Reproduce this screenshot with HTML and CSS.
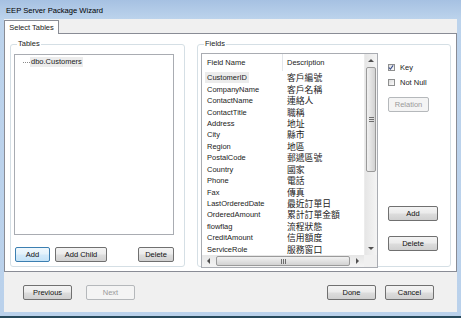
FILE: index.html
```html
<!DOCTYPE html>
<html lang="zh-Hant">
<head>
    <meta charset="UTF-8">
    <meta name="viewport" content="width=device-width, initial-scale=1.0">
    <title>EEP Server Package Wizard</title>
    <link rel="stylesheet" href="styles.css">
</head>
<body>
    <div class="window">
        <div class="titlebar">EEP Server Package Wizard</div>
        <div class="client">
            <div class="tabstrip">
                <div class="tab">Select Tables</div>
            </div>
            <div class="tabpage">
                <div class="group tables">
                    <div class="group-title">Tables</div>
                    <div class="treebox">
                        <div class="tree-item"><span class="tree-line"></span><span class="node">dbo.Customers</span></div>
                    </div>
                    <div class="btn-row">
                        <button class="btn focused w35">Add</button>
                        <button class="btn w52">Add Child</button>
                        <button class="btn w36 push">Delete</button>
                    </div>
                </div>
                <div class="group fields">
                    <div class="group-title">Fields</div>
                    <div class="fields-body">
                        <div class="listview">
                            <div class="lv-main">
                                <div class="lv-header">
                                    <span class="col1">Field Name</span>
                                    <span class="col2">Description</span>
                                </div>
                                <div class="lv-rows">
                                    <div class="row"><span class="col1"><span class="cur">CustomerID</span></span><span class="col2">客戶編號</span></div>
                                    <div class="row"><span class="col1">CompanyName</span><span class="col2">客戶名稱</span></div>
                                    <div class="row"><span class="col1">ContactName</span><span class="col2">連絡人</span></div>
                                    <div class="row"><span class="col1">ContactTitle</span><span class="col2">職稱</span></div>
                                    <div class="row"><span class="col1">Address</span><span class="col2">地址</span></div>
                                    <div class="row"><span class="col1">City</span><span class="col2">縣市</span></div>
                                    <div class="row"><span class="col1">Region</span><span class="col2">地區</span></div>
                                    <div class="row"><span class="col1">PostalCode</span><span class="col2">郵遞區號</span></div>
                                    <div class="row"><span class="col1">Country</span><span class="col2">國家</span></div>
                                    <div class="row"><span class="col1">Phone</span><span class="col2">電話</span></div>
                                    <div class="row"><span class="col1">Fax</span><span class="col2">傳真</span></div>
                                    <div class="row"><span class="col1">LastOrderedDate</span><span class="col2">最近訂單日</span></div>
                                    <div class="row"><span class="col1">OrderedAmount</span><span class="col2">累計訂單金額</span></div>
                                    <div class="row"><span class="col1">flowflag</span><span class="col2">流程狀態</span></div>
                                    <div class="row"><span class="col1">CreditAmount</span><span class="col2">信用額度</span></div>
                                    <div class="row"><span class="col1">ServiceRole</span><span class="col2">服務窗口</span></div>
                                </div>
                            </div>
                            <div class="vscroll">
                                <div class="arrow"><span class="tri up"></span></div>
                                <div class="vthumb"><span class="grip-h"></span></div>
                                <div class="vtrack"></div>
                                <div class="arrow"><span class="tri down"></span></div>
                            </div>
                            <div class="hscroll">
                                <div class="harrow"><span class="tri left"></span></div>
                                <div class="hthumb"><span class="grip-v"></span></div>
                                <div class="harrow"><span class="tri right"></span></div>
                            </div>
                            <div class="corner"></div>
                        </div>
                        <div class="side">
                            <label class="check"><span class="box checked">
                                <svg width="7" height="7" viewBox="0 0 7 7"><path d="M1 3.5 L2.8 5.5 L6 1" fill="none" stroke="#3b4f8c" stroke-width="1.3"/></svg>
                            </span>Key</label>
                            <label class="check"><span class="box"></span>Not Null</label>
                            <button class="btn w41 relation" disabled>Relation</button>
                            <button class="btn w50 add2">Add</button>
                            <button class="btn w50 del2">Delete</button>
                        </div>
                    </div>
                </div>
            </div>
            <div class="footer">
                <button class="btn w49">Previous</button>
                <button class="btn w49 next" disabled>Next</button>
                <button class="btn w49 done">Done</button>
                <button class="btn w49 cancel">Cancel</button>
            </div>
        </div>
    </div>
</body>
</html>
```

FILE: styles.css
```css
* {
    box-sizing: border-box;
}
body {
    margin: 0;
    font-family: "Liberation Sans", "Noto Sans CJK TC", sans-serif;
    font-size: 7.5px;
    color: #222;
}
.window {
    width: 461px;
    height: 318px;
    display: flex;
    flex-direction: column;
    background: linear-gradient(#a6c1e2, #bcd3ec 19px, #bad1eb);
    border-bottom: 2px solid #27495b;
}
.titlebar {
    height: 19px;
    padding: 2px 0 0 6px;
    display: flex;
    align-items: center;
    font-size: 7.6px;
    color: #000;
}
.client {
    flex: 1;
    margin: 0 4px 4px 4px;
    background: #f0f0f0;
    display: flex;
    flex-direction: column;
}
.tabstrip {
    height: 15px;
    padding-top: 1px;
    margin-bottom: -1px;
    display: flex;
}
.tab {
    position: relative;
    z-index: 1;
    width: 55px;
    height: 14px;
    border: 1px solid #898c95;
    border-bottom: none;
    background: #fff;
    display: flex;
    align-items: center;
    justify-content: center;
    border-radius: 1px 1px 0 0;
}
.tabpage {
    height: 239px;
    border: 1px solid #898c95;
    background: #fff;
    padding: 10px 5px 4px 5px;
    display: flex;
    gap: 12px;
}
.group {
    border: 1px solid #d5dfe5;
    border-radius: 3px;
    display: flex;
    flex-direction: column;
}
.group-title {
    align-self: flex-start;
    margin: -6px 0 0 3px;
    padding: 0 1px;
    line-height: 9px;
    background: #fff;
}
.tables {
    width: 175px;
    padding: 0 10px 4px 3px;
}
.treebox {
    flex: 1;
    margin-top: 6px;
    border: 1px solid #a9acb2;
    background: #fff;
    padding-top: 2px;
}
.tree-item {
    display: flex;
    align-items: center;
    padding-left: 8px;
    height: 10px;
}
.tree-line {
    width: 7px;
    border-top: 1px dotted #8a8a8a;
}
.node {
    background: #ececec;
    padding: 0 1px;
    line-height: 10px;
}
.btn-row {
    margin-top: 12px;
    display: flex;
    padding-left: 1px;
}
.btn {
    font: inherit;
    height: 15px;
    padding: 0;
    color: #111;
    border: 1px solid #707070;
    border-radius: 2px;
    background: linear-gradient(#f3f3f3, #ebebeb 48%, #dddddd 52%, #d0d0d0);
}
.btn:disabled {
    color: #9a9a9a;
    border-color: #b5b8bb;
    background: #f4f4f4;
}
.btn.focused {
    border-color: #3c7fb1;
    background: linear-gradient(#f0f8fd, #e3f2fb 48%, #d3eafa 52%, #c5e3f7);
}
.w35 { width: 35px; }
.w36 { width: 36px; }
.w41 { width: 41px; }
.w49 { width: 49px; }
.w50 { width: 50px; }
.w52 { width: 52px; margin-left: 5px; }
.push { margin-left: auto; }
.fields {
    width: 254px;
    padding: 0 0 2px 3px;
}
.fields-body {
    flex: 1;
    margin-top: 5px;
    display: flex;
}
.listview {
    width: 177px;
    border: 1px solid #a9acb2;
    display: grid;
    grid-template-columns: 1fr 13px;
    grid-template-rows: 1fr 12px;
    overflow: hidden;
}
.lv-main {
    overflow: hidden;
    background: #fff;
}
.lv-header {
    height: 17px;
    display: flex;
    align-items: center;
}
.lv-header .col1 {
    border-right: 1px solid #e3e6ea;
    height: 17px;
    display: flex;
    align-items: center;
}
.lv-rows {
    padding-top: 1px;
}
.row {
    display: flex;
    height: 11.45px;
    align-items: center;
}
.col1 {
    width: 81px;
    flex: none;
    padding-left: 5px;
}
.col2 {
    padding-left: 4px;
}
.row .col2 {
    font-size: 8.8px;
}
.cur {
    background: #ececec;
    margin-left: -2px;
    padding: 0 2px;
    display: inline-block;
    line-height: 11px;
}
.vscroll {
    background: linear-gradient(90deg, #e6e6e6, #f4f4f4);
    display: flex;
    flex-direction: column;
    border-left: 1px solid #ececec;
}
.arrow {
    height: 13px;
    display: flex;
    align-items: center;
    justify-content: center;
}
.vthumb {
    height: 105px;
    margin: 0 1px;
    border: 1px solid #9a9a9a;
    border-radius: 2px;
    background: linear-gradient(90deg, #f1f1f1, #e2e2e2 50%, #d2d2d2);
    display: flex;
    align-items: center;
    justify-content: center;
}
.vtrack {
    flex: 1;
}
.grip-h {
    width: 5px;
    height: 5px;
    background: repeating-linear-gradient(#6e6e6e 0 1px, transparent 1px 2px);
}
.hscroll {
    background: linear-gradient(#e6e6e6, #f4f4f4);
    display: flex;
    align-items: stretch;
}
.harrow {
    width: 13px;
    display: flex;
    align-items: center;
    justify-content: center;
}
.hthumb {
    width: 134px;
    margin: 1px 1px;
    border: 1px solid #9a9a9a;
    border-radius: 2px;
    background: linear-gradient(#f1f1f1, #e2e2e2 50%, #d2d2d2);
    display: flex;
    align-items: center;
    justify-content: center;
}
.grip-v {
    width: 5px;
    height: 5px;
    background: repeating-linear-gradient(90deg, #6e6e6e 0 1px, transparent 1px 2px);
}
.corner {
    background: #f0f0f0;
}
.tri {
    width: 0;
    height: 0;
    border: 3px solid transparent;
}
.tri.up { border-bottom-color: #505050; border-top-width: 0; }
.tri.down { border-top-color: #505050; border-bottom-width: 0; }
.tri.left { border-right-color: #505050; border-left-width: 0; }
.tri.right { border-left-color: #505050; border-right-width: 0; }
.side {
    margin-left: 10px;
    width: 50px;
    display: flex;
    flex-direction: column;
    align-items: flex-start;
    padding: 9px 0 17px 0;
}
.check {
    height: 10px;
    display: flex;
    align-items: center;
    gap: 5px;
    margin-bottom: 5px;
}
.box {
    width: 7px;
    height: 7px;
    border: 1px solid #8e8f8f;
    background: linear-gradient(135deg, #dcdcdc, #fbfbfb);
    display: flex;
}
.box svg {
    margin: -1px 0 0 -1px;
}
.relation {
    margin-top: 5px;
}
.add2 {
    margin-top: auto;
}
.del2 {
    margin-top: 15px;
}
.footer {
    flex: 1;
    display: flex;
    align-items: flex-start;
    padding: 13px 23px 0 19px;
}
.next {
    margin-left: 14px;
}
.done {
    margin-left: auto;
}
.cancel {
    margin-left: 9px;
}
```
